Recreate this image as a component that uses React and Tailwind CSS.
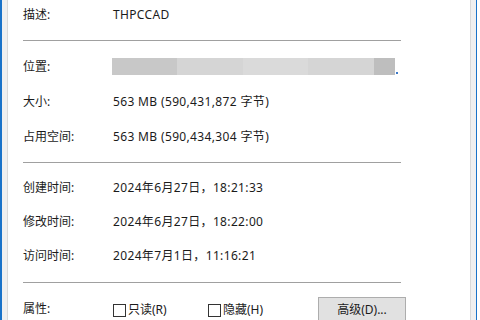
import React from 'react';

const font = { fontFamily: '"Noto Sans", "Noto Sans CJK SC", sans-serif' };

const Row = ({ label, children, h = 'h-[35px]' }) => (
  <div className={`flex items-center ${h}`}>
    <div className="w-[90px] shrink-0">{label}</div>
    <div className="tracking-[0.35px]">{children}</div>
  </div>
);

const Divider = () => <div className="h-px bg-[#a0a0a0] w-[378px]" />;

const Checkbox = ({ label, className = '' }) => (
  <label className={`flex items-center gap-[2px] ${className}`}>
    <span className="w-[13px] h-[13px] border border-[#333333] bg-white" />
    <span>{label}</span>
  </label>
);

export default function App() {
  return (
    <div
      className="w-[480px] h-[320px] overflow-hidden bg-white flex text-[12px] text-[#1b1b1b]"
      style={font}
    >
      <div className="w-[2px] bg-[#1a73c9]" />
      <div className="flex-1 flex bg-[#f0f0f0] px-[5px]">
        <div className="flex-1 bg-white border-x border-[#d9d9d9] pl-[15px]">
          <div className="-mt-[3px]">
            <Row label="描述:">THPCCAD</Row>
          </div>
          <div className="h-[8px]" />
          <Divider />
          <div className="h-[8px]" />
          <Row label="位置:">
            <div className="flex items-end">
              <div className="flex h-[17px] w-[283px] -ml-[1px]">
                <div className="w-[65px] bg-[#c8c8c8]" />
                <div className="w-[66px] bg-[#d5d5d5]" />
                <div className="w-[65px] bg-[#dadada]" />
                <div className="w-[66px] bg-[#d5d5d5]" />
                <div className="w-[21px] bg-[#bebebe]" />
              </div>
              <div className="w-[2px] h-[2px] bg-[#3a78c8] ml-[1px] mb-[1px]" />
            </div>
          </Row>
          <Row label="大小:">563 MB (590,431,872 字节)</Row>
          <Row label="占用空间:">563 MB (590,434,304 字节)</Row>
          <div className="h-[8px]" />
          <Divider />
          <div className="h-[8px]" />
          <Row label="创建时间:" h="h-[34px]">2024年6月27日，18:21:33</Row>
          <Row label="修改时间:" h="h-[34px]">2024年6月27日，18:22:00</Row>
          <Row label="访问时间:" h="h-[34px]">2024年7月1日，11:16:21</Row>
          <div className="h-[9px]" />
          <Divider />
          <div className="flex items-start">
            <div className="w-[90px] shrink-0 mt-[18px] leading-[16px]">属性:</div>
            <div className="flex items-center mt-[19px] leading-[16px]">
              <Checkbox label="只读(R)" className="w-[95px]" />
              <Checkbox label="隐藏(H)" />
            </div>
            <div className="ml-auto mr-[64px] mt-[14px] w-[88px] h-[26px] bg-[#e1e1e1] border border-[#adadad] flex items-center justify-center">
              高级(D)...
            </div>
          </div>
        </div>
      </div>
      <div className="w-[1px] bg-[#1a73c9]" />
      <div className="w-[3px] bg-white" />
    </div>
  );
}
